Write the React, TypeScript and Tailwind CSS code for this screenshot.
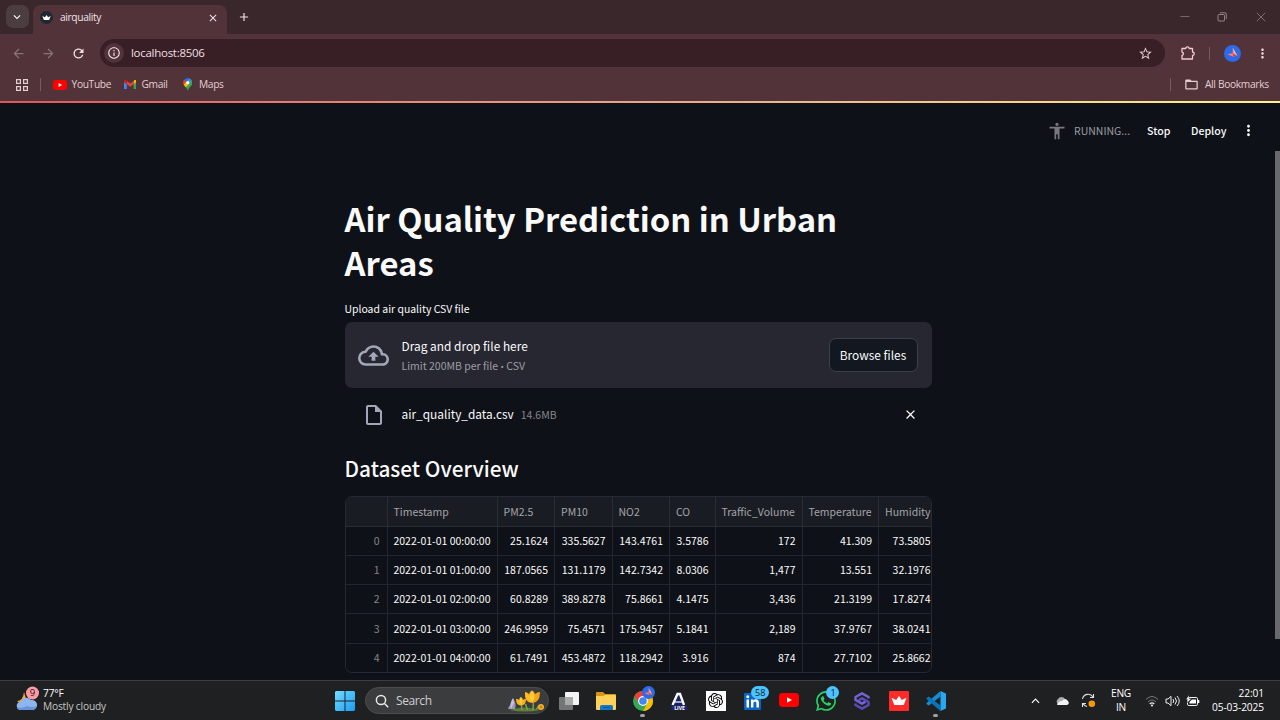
import type { ReactNode } from "react";
import {
  MdAccessibility,
  MdArrowBack,
  MdArrowForward,
  MdClose,
  MdExpandMore,
  MdFolderOpen,
  MdAdd,
  MdInfoOutline,
  MdMoreVert,
  MdOutlineCloudUpload,
  MdOutlineInsertDriveFile,
  MdRefresh,
  MdStarBorder,
} from "react-icons/md";
import { SiOpenai, SiWhatsapp } from "react-icons/si";

const headers = ["", "Timestamp", "PM2.5", "PM10", "NO2", "CO", "Traffic_Volume", "Temperature", "Humidity"];

const rows = [
  ["0", "2022-01-01 00:00:00", "25.1624", "335.5627", "143.4761", "3.5786", "172", "41.309", "73.5805"],
  ["1", "2022-01-01 01:00:00", "187.0565", "131.1179", "142.7342", "8.0306", "1,477", "13.551", "32.1976"],
  ["2", "2022-01-01 02:00:00", "60.8289", "389.8278", "75.8661", "4.1475", "3,436", "21.3199", "17.8274"],
  ["3", "2022-01-01 03:00:00", "246.9959", "75.4571", "175.9457", "5.1841", "2,189", "37.9767", "38.0241"],
  ["4", "2022-01-01 04:00:00", "61.7491", "453.4872", "118.2942", "3.916", "874", "27.7102", "25.8662"],
];

const gridCols = "grid grid-cols-[42px_110px_57.5px_57.5px_57.5px_45.5px_87px_76.5px_58.5px]";

function Crown({ className }: { className: string }) {
  return (
    <svg viewBox="0 0 20 12" className={className} fill="currentColor">
      <path d="M0 2.200 6.200 5.200 10 0l3.800 5.200L20 2.200 16.600 11.200Q16.300 12 15.400 12H4.600Q3.700 12 3.400 11.200Z" />
    </svg>
  );
}

function YouTube({ className }: { className: string }) {
  return (
    <svg viewBox="0 0 20 14" className={className}>
      <rect width="20" height="14" rx="3.400" fill="#ff0000" />
      <path d="M8 4.200v5.600L13 7z" fill="#fff" />
    </svg>
  );
}

function Gmail() {
  return (
    <svg viewBox="0 0 24 18" className="h-[9.5px] w-[12.5px]">
      <path d="M0 3v13.400A1.600 1.600 0 0 0 1.600 18H5.500V7z" fill="#4285f4" />
      <path d="M24 3v13.400a1.600 1.600 0 0 1-1.600 1.600h-3.900V7z" fill="#34a853" />
      <path d="M18.500 1.600V8L24 4V2.500C24 .2 21.500-.8 19.800.5z" fill="#fbbc04" />
      <path d="M5.500 8V1.600L12 6.500l6.500-4.900V8L12 13z" fill="#ea4335" />
      <path d="M0 2.500V4l5.500 4V1.600L4.200.5C2.500-.8 0 .2 0 2.500z" fill="#c5221f" />
    </svg>
  );
}

function MapsPin() {
  return (
    <svg viewBox="0 0 20 28" className="h-[13px] w-[9.5px]">
      <path d="M10 0A10 10 0 0 0 2.300 3.700L7 7.700 13 .5A10 10 0 0 0 10 0z" fill="#1a73e8" />
      <path d="M2.300 3.700A10 10 0 0 0 1.300 14.500L7 7.700z" fill="#ea4335" />
      <path d="M13 .5 7 7.700a4 4 0 0 0 6 5L18.800 5.500A10 10 0 0 0 13 .5z" fill="#4285f4" />
      <path d="M1.300 14.500 4 18l9-11 5.800-1.500a10 10 0 0 1-.3 9.500C16 19 12.500 20 10 28 8.500 22 6 20 4 18z" fill="#34a853" />
      <path d="M1.300 14.500 7 7.700a4 4 0 0 0 6 5L5.300 19.800z" fill="#fbbc04" />
      <circle cx="10" cy="10" r="3.600" fill="#fff" />
    </svg>
  );
}

function Avatar({ className }: { className: string }) {
  return (
    <svg viewBox="0 0 18 18" className={className}>
      <circle cx="9" cy="9" r="9" fill="#2d6ae8" />
      <path d="M9.300 2.800 14.200 11.300 9.500 12.300 3.500 9.800 9.200 8.800z" fill="#f0837f" />
      <path d="M9.300 2.800 14.200 11.300 10.500 9.500z" fill="#f9a79a" />
      <path d="M9.200 8.800 14.200 11.300 9.500 12.300z" fill="#c44c66" />
    </svg>
  );
}

function BrowserChrome() {
  return (
    <header className="h-[101px] bg-[#52333a] font-['Open_Sans',sans-serif] text-[#e3cfd2]">
      <div className="flex h-[34px] bg-[#3a272b]">
        <div className="flex w-[33px] pl-[5.500px] pt-[5px]">
          <div className="flex size-[23px] items-center justify-center rounded-[7px] bg-[#4b3d40]">
            <MdExpandMore className="size-[14px] text-white" />
          </div>
        </div>
        <div className="mt-[5px] flex h-[29px] w-[194px] items-center rounded-t-[8px] bg-[#52333a] pb-[4px] pl-[7px]">
          <div className="flex size-[13px] items-center justify-center rounded-full bg-[#1f2731]">
            <Crown className="h-[5px] w-[9px] text-white" />
          </div>
          <span className="ml-[7px] flex-1 text-[10.200px] tracking-[-0.350px] text-[#f0e4e6]">airquality</span>
          <MdClose className="mr-[8px] size-[12px] text-[#f0e4e6]" />
        </div>
        <MdAdd className="ml-[10px] mt-[10px] size-[14px] text-[#f0e4e6]" />
        <div className="ml-auto flex items-center pr-[14px] text-[#85777a]">
          <svg viewBox="0 0 10 10" className="size-[10px]" fill="none" stroke="currentColor" strokeWidth=".8"><path d="M.5 4.500h9" /></svg>
          <svg viewBox="0 0 10 10" className="ml-[27px] size-[10px]" fill="none" stroke="#a89b9e" strokeWidth=".8"><rect x="1" y="2.500" width="6.500" height="6.500" rx="1" /><path d="M3 .8h5A1.300 1.300 0 0 1 9.300 2v5" /></svg>
          <svg viewBox="0 0 10 10" className="ml-[29px] size-[10px]" fill="none" stroke="currentColor" strokeWidth=".9"><path d="m.8.8 8.400 8.400M9.200.8.800 9.200" /></svg>
        </div>
      </div>
      <div className="flex h-[38px] items-center">
        <MdArrowBack className="ml-[11px] size-[15px] text-[#8b7378]" />
        <MdArrowForward className="ml-[15px] size-[15px] text-[#8b7378]" />
        <MdRefresh className="ml-[15px] size-[15px] text-[#f0dfe2]" />
        <div className="ml-[14px] flex h-[28px] w-[1065px] items-center rounded-full bg-[#381f25] pl-[4px] pr-[12px]">
          <div className="flex size-[20px] items-center justify-center rounded-full bg-[#52333a]">
            <MdInfoOutline className="size-[14px] text-[#f0dfe2]" />
          </div>
          <span className="ml-[7px] flex-1 text-[11.500px] tracking-[-0.280px] text-[#f0dfe2]">localhost:8506</span>
          <MdStarBorder className="size-[15px] text-[#e3cfd2]" />
        </div>
        <svg viewBox="0 0 16 16" className="ml-[15px] size-[16px]" fill="none" stroke="#f5c9d4" strokeWidth="1.300" strokeLinejoin="round">
          <path d="M2 3.500h3.800a1.700 1.700 0 0 1 3.400 0H12.500V7a1.700 1.700 0 0 1 0 3.400v3.600H2v-3.500a1.800 1.800 0 0 0 0-3.500z" />
        </svg>
        <div className="ml-[13px] h-[13px] w-px bg-[#7a5a61]" />
        <Avatar className="ml-[14px] size-[17px]" />
        <MdMoreVert className="ml-[14px] size-[15px] text-[#f0dfe2]" />
      </div>
      <div className="flex h-[25px] items-center text-[10.200px] tracking-[-0.320px]">
        <svg viewBox="0 0 12 12" className="ml-[16px] size-[12px]" fill="none" stroke="#e3cfd2" strokeWidth="1.200">
          <rect x=".6" y=".6" width="3.800" height="3.800" /><rect x="7.600" y=".6" width="3.800" height="3.800" />
          <rect x=".6" y="7.600" width="3.800" height="3.800" /><rect x="7.600" y="7.600" width="3.800" height="3.800" />
        </svg>
        <div className="ml-[12px] h-[13px] w-px bg-[#7a5a61]" />
        <YouTube className="ml-[12px] h-[10px] w-[14px]" />
        <span className="ml-[4.500px] w-[52px]">YouTube</span>
        <Gmail />
        <span className="ml-[5.500px] w-[41px]">Gmail</span>
        <MapsPin />
        <span className="ml-[7px]">Maps</span>
        <div className="ml-auto h-[13px] w-px bg-[#7a5a61]" />
        <MdFolderOpen className="ml-[13px] size-[15px]" />
        <span className="ml-[6px] w-[75px] whitespace-nowrap">All Bookmarks</span>
      </div>
    </header>
  );
}

function DataTable() {
  return (
    <div className="mt-[14px] h-[177px] w-[587px] overflow-hidden rounded-[7px] border border-[#262932] text-[10.500px]">
      <div className={`${gridCols} h-[29.500px] bg-[#1a1c23] text-[#a3a4a8]`}>
        {headers.map((h, i) => (
          <div key={i} className="flex items-center border-b border-r border-[#2a2c34] pl-[6px] pt-px leading-[16px]">
            {h}
          </div>
        ))}
      </div>
      {rows.map((row) => (
        <div key={row[0]} className={`${gridCols} h-[29.300px] text-[#fafafa]`}>
          {row.map((cell, i) => (
            <div
              key={i}
              className={`flex items-center justify-end whitespace-nowrap border-b border-r border-[#23262e] leading-[16px] ${i === 0 ? "pr-[7px] text-[#83858b]" : "pr-[6px]"}`}
            >
              {cell}
            </div>
          ))}
        </div>
      ))}
    </div>
  );
}

function AppPage() {
  return (
    <main className="flex h-[577px] flex-col overflow-hidden bg-[#0e1117] font-['Noto_Sans_CJK_SC',sans-serif] text-[#fafafa]">
      <div className="flex h-[48px] shrink-0 items-center justify-end pr-[23px] pt-[7px]">
        <MdAccessibility className="size-[20px] text-[#77797e]" />
        <span className="ml-[7px] w-[73px] text-[10.500px] text-[#9c9da2]">RUNNING...</span>
        <span className="w-[44px] text-[10.600px] font-medium">Stop</span>
        <span className="w-[49px] text-[10.600px] font-medium">Deploy</span>
        <MdMoreVert className="size-[17px]" />
      </div>
      <div className="flex flex-1">
        <div className="ml-[344.500px] w-[587px]">
          <h1 className="pt-[45px] text-[32.800px] font-bold leading-[44px]">Air Quality Prediction in Urban Areas</h1>
          <p className="mt-[16px] text-[10.450px] leading-[18px]">Upload air quality CSV file</p>
          <section className="mt-[4px] flex h-[66px] items-center rounded-[7px] bg-[#262730] pl-[13px] pr-[14px]">
            <MdOutlineCloudUpload className="size-[31px] text-[#a3a8b8]" />
            <div className="ml-[13px] flex-1 pt-[3px]">
              <p className="text-[11.900px] leading-[20px]">Drag and drop file here</p>
              <p className="text-[10.500px] leading-[20px] text-[#9d9ea3]">
                Limit 200MB per file <span className="font-['Open_Sans',sans-serif] text-[9px]">•</span> CSV
              </p>
            </div>
            <button className="h-[34px] w-[89px] rounded-[7px] border border-[#3d4049] bg-[#131720] text-[11.900px]">Browse files</button>
          </section>
          <div className="mt-[13px] flex h-[26px] items-center pl-[17px] pr-[14px]">
            <MdOutlineInsertDriveFile className="mt-px size-[24px] text-[#a3a8b8]" />
            <span className="ml-[16px] text-[11.900px]">air_quality_data.csv</span>
            <span className="ml-[7px] flex-1 pt-px text-[10.500px] text-[#85878c]">14.6MB</span>
            <MdClose className="size-[15px]" />
          </div>
          <h3 className="mt-[27px] text-[20.800px] font-medium leading-[28px]">Dataset Overview</h3>
          <DataTable />
        </div>
        <div className="ml-auto h-[488px] w-[5px] bg-[#67696d]" />
      </div>
    </main>
  );
}

function Slot({ children, active }: { children: ReactNode; active?: boolean }) {
  return (
    <div className="relative flex h-full w-[36.650px] items-center justify-center">
      {children}
      {active && <div className="absolute bottom-[3.500px] h-[2.500px] w-[5px] rounded-full bg-[#a0a0a0]" />}
    </div>
  );
}

function Taskbar() {
  return (
    <footer className="relative flex h-[40px] items-center border-t border-[#3b3d3f] bg-[#1f2022] font-['Open_Sans',sans-serif] text-[10.200px] text-white">
      <svg viewBox="0 0 26 28" className="mb-[4px] ml-[15px] h-[28px] w-[26px]">
        <path d="M9 7q-1 9-7 9 4 4 10 1z" fill="#f5a83b" />
        <path d="M6 25a4 4 0 0 1-.5-8A6 6 0 0 1 16 15a5 5 0 0 1 2 10z" fill="#8db5ee" />
        <path d="M5 25a4 4 0 0 1-3-3q5 2 10-1 5 2 9 0-1 4-4 4z" fill="#6b93db" />
        <circle cx="17.500" cy="8" r="6.500" fill="#fd9aa4" />
        <text x="17.500" y="11.400" textAnchor="middle" fontSize="9.500" fill="#2b1518">9</text>
      </svg>
      <div className="ml-[2px] w-[286px] pb-px leading-[13.500px] tracking-[-0.180px]">
        <p>77°F</p>
        <p className="text-[#c5c5c6]">Mostly cloudy</p>
      </div>
      <svg viewBox="0 0 20 20" className="ml-[6px] size-[20px]">
        <defs><linearGradient id="win" x1="0" y1="0" x2="1" y2="1"><stop stopColor="#76dcff" /><stop offset="1" stopColor="#189cf4" /></linearGradient></defs>
        <path d="M0 1 1 0h8.500v9.500H0zM10.500 0H19l1 1v8.500h-9.500zM0 10.500h9.500V20H1l-1-1zM10.500 10.500H20V19l-1 1h-8.500z" fill="url(#win)" />
      </svg>
      <div className="ml-[10px] flex h-[27px] w-[184px] items-center rounded-full border border-[#4c4d4f] bg-[#3b3c3e] pl-[9px] pr-[3px]">
        <svg viewBox="0 0 14 14" className="size-[14px]" fill="none" stroke="#e8e8e8" strokeWidth="1.500"><circle cx="6" cy="6" r="4.600" /><path d="m9.500 9.500 3.700 3.700" /></svg>
        <span className="ml-[7px] flex-1 text-[12px] tracking-[-0.400px] text-[#d0d0d0]">Search</span>
        <svg viewBox="0 0 38 22" className="h-[22px] w-[38px]">
          <path d="M2 20q16-5 32 0-16 3-32 0z" fill="#627d37" />
          <path d="m15 20-1-8m12 8 .5-10m-6 10-2-6m11 5 3-4" stroke="#78a443" strokeWidth="1.500" />
          <path d="M1 19q1-4 4-5l1-6q4 6 2 11z" fill="#9b95b5" /><path d="m6 8 1 5-3 6q-2-5 2-11z" fill="#c6c2d8" />
          <path d="M9 9q2-.5 3 1 .5-2.500 2-3 1.800.8 2 3 1.500-1.500 3-1 0 6.500-5 6.500T9 9z" fill="#f8b31d" /><path d="M14 7q2.500 4 0 8-2.500-4 0-8z" fill="#ffcf43" />
          <path d="M18 2q3 .5 4 2 1-3 3-3.500Q27 1 28 4q2-2 5-2 0 11-8 11T18 2z" fill="#f5a415" /><path d="M25 .5q5 6 0 12-5-6 0-12z" fill="#ffc93c" /><path d="M18 2q6 3 6 10.500Q18 10 18 2z" fill="#ffbd28" />
          <circle cx="34" cy="17" r="3" fill="#f4ad27" /><circle cx="34" cy="17" r="1.200" fill="#c87813" />
        </svg>
      </div>
      <div className="ml-[2px] flex h-full">
        <Slot>
          <svg viewBox="0 0 20 18" className="h-[18px] w-[20px]"><rect x="6" width="14" height="13" rx="1" fill="#f4f4f4" /><rect y="5" width="14" height="13" rx="1" fill="#747576" /><path d="M6 5h8v8H6z" fill="#aaa" /></svg>
        </Slot>
        <Slot>
          <svg viewBox="0 0 20 18" className="h-[18px] w-[20px]"><path d="M0 1Q0 0 1 0h6l2 2h10q1 0 1 1v4H0z" fill="#d99514" /><path d="M0 4h7l2-1h10q1 0 1 1v13q0 1-1 1H1q-1 0-1-1z" fill="#ffd15a" /><path d="M4 18v-3.500q0-1.500 1.500-1.500h10q1.500 0 1.500 1.500V18z" fill="#1577c8" /><path d="M7 15.500h7" stroke="#085395" /></svg>
        </Slot>
        <Slot active>
          <svg viewBox="0 0 20 20" className="size-[20px]">
            <circle cx="10" cy="10" r="10" fill="#34a853" />
            <path d="M1.340 5A10 10 0 0 1 18.660 5H10L5.700 7.500 5.700 12.500z" fill="#ea4335" />
            <path d="M18.660 5A10 10 0 0 1 10 20l4.300-7.500L14.300 5z" fill="#fbbc04" />
            <circle cx="10" cy="10" r="4.900" fill="#fff" /><circle cx="10" cy="10" r="3.800" fill="#4285f4" />
          </svg>
          <Avatar className="absolute left-[18px] top-[5px] size-[13px]" />
        </Slot>
        <Slot>
          <svg viewBox="0 0 20 20" className="size-[20px]"><path d="M7 1h5l7 18H1z" fill="#1b2259" /><path d="M3.500 14 8.500 3H11l4 11" fill="none" stroke="#fff" strokeWidth="2.300" /><path d="M6 11h7" stroke="#ccd5ff" strokeWidth="1.500" /><path d="M3 14.500h15V19H3z" fill="#20286f" /><text x="10.500" y="18.500" textAnchor="middle" fontSize="5" fontWeight="700" fill="#fff">LIVE</text></svg>
        </Slot>
        <Slot>
          <div className="flex size-[20px] items-center justify-center bg-white"><SiOpenai className="size-[15px] text-black" /></div>
        </Slot>
        <Slot>
          <svg viewBox="0 0 17 17" className="mt-px size-[17px]"><rect width="17" height="17" rx="1" fill="#0a66c2" /><path d="M2.500 6.500H5v8H2.500zM7 6.500h2.400v1.200q.8-1.400 2.500-1.400 3 0 3 3.600v4.600h-2.500v-4.100q0-1.900-1.400-1.900-1.600 0-1.600 2v4H7z" fill="#fff" /><circle cx="3.750" cy="3.800" r="1.500" fill="#fff" /></svg>
          <span className="absolute left-[17px] top-[5px] flex h-[13px] w-[18px] items-center justify-center rounded-full bg-[#4cc2ff] text-[9px] text-[#10222c]">58</span>
        </Slot>
        <Slot><YouTube className="mb-px h-[14px] w-[20px]" /></Slot>
        <Slot>
          <SiWhatsapp className="size-[20px] text-[#25d366]" />
          <span className="absolute left-[19px] top-[5px] flex size-[13px] items-center justify-center rounded-full bg-[#4cc2ff] text-[9px] text-[#10222c]">1</span>
        </Slot>
        <Slot>
          <svg viewBox="0 0 18 20" className="h-[20px] w-[18px]" fill="none" strokeWidth="2.500" strokeLinejoin="round"><path d="M15.500 7.500V6L9 2.300 2.500 6v3L9 12.700l3.500-2" stroke="#7463d2" /><path d="M2.500 12.500V14L9 17.700l6.500-3.700v-3L9 7.300l-3.500 2" stroke="#5a4bb8" /></svg>
        </Slot>
        <Slot><div className="flex size-[20px] items-center justify-center rounded-[1px] bg-[#ff2b2b]"><Crown className="h-[9px] w-[16px] text-white" /></div></Slot>
        <Slot active>
          <svg viewBox="0 0 20 20" className="size-[20px]"><path d="M14.500 0 20 2.500v15L14.500 20z" fill="#29a8ee" /><path d="M14.500 0v5.500L2.800 14.600.5 13V12z" fill="#1b8bd1" /><path d="M14.500 20v-5.500L2.800 5.400.5 7v1z" fill="#0877b9" /></svg>
        </Slot>
      </div>
      <div className="ml-auto flex items-center pr-[16px] tracking-[-0.120px]">
        <svg viewBox="0 0 10 6" className="h-[6px] w-[9px]" fill="none" stroke="#fff" strokeWidth="1.300"><path d="m1 5 4-4 4 4" /></svg>
        <svg viewBox="0 0 14 9" className="ml-[15px] h-[9px] w-[14px]"><path d="M3 8a3 3 0 0 1 0-5 4 4 0 0 1 7 0l-2 4z" fill="#aaa" /><path d="M2 9q1-4 5-4 3-4 6 0 2 3-1 4z" fill="#f2f2f2" /></svg>
        <svg viewBox="0 0 15 15" className="ml-[12px] size-[15px]" fill="none" stroke="#e0e0e0" strokeWidth="1.100"><path d="M1.500 6A5.700 5.700 0 0 1 12 4m.5-3v3.500H9M1.500 14v-3.500H5M2 10.500a6 6 0 0 0 4 3" /><circle cx="10.800" cy="10.800" r="3.300" fill="#f7980f" stroke="none" /></svg>
        <div className="ml-[15px] w-[20px] text-center leading-[13.500px] tracking-[-0.300px]"><p>ENG</p><p>IN</p></div>
        <svg viewBox="0 0 14 12" className="ml-[14px] h-[12px] w-[14px]" fill="none" stroke="#777"><path d="M1 4.500Q7-1.500 13 4.500" /><path d="M3 7q4-4 8 0" /><path d="M4.700 9q2.300-2.300 4.600 0" stroke="#e8e8e8" strokeWidth="1.200" /><circle cx="7" cy="10.500" r="1" fill="#fff" stroke="none" /></svg>
        <svg viewBox="0 0 15 12" className="ml-[6px] h-[12px] w-[15px]" fill="none" stroke="#f0f0f0"><path d="M1 4h2l3-2.700v9.400L3 8H1zM8 4q1.500 2 0 4M10 2.500q3 3.500 0 7M12 1q4.500 5 0 10" /></svg>
        <svg viewBox="0 0 15 12" className="ml-[5px] h-[12px] w-[15px]" fill="none" stroke="#f0f0f0"><rect x="2.500" y="2.500" width="10" height="8" rx="1.300" /><path d="M7 4.500h4v4H4.500V7zM13 5h1.300v3H13z" fill="#fff" stroke="none" /><path d="M4 0 1 4.500h2L2 8l4.500-4.500H4z" fill="#fff" stroke="#1f2022" strokeWidth=".4" /></svg>
        <div className="ml-[12px] w-[52px] whitespace-nowrap text-right leading-[13.500px]"><p>22:01</p><p>05-03-2025</p></div>
      </div>
    </footer>
  );
}

export default function App() {
  return (
    <div className="flex h-[720px] w-[1280px] flex-col overflow-hidden">
      <BrowserChrome />
      <div className="h-[2px] bg-linear-to-r from-[#e0545c] via-[#e8a58a] to-[#fff38a]" />
      <AppPage />
      <Taskbar />
    </div>
  );
}
